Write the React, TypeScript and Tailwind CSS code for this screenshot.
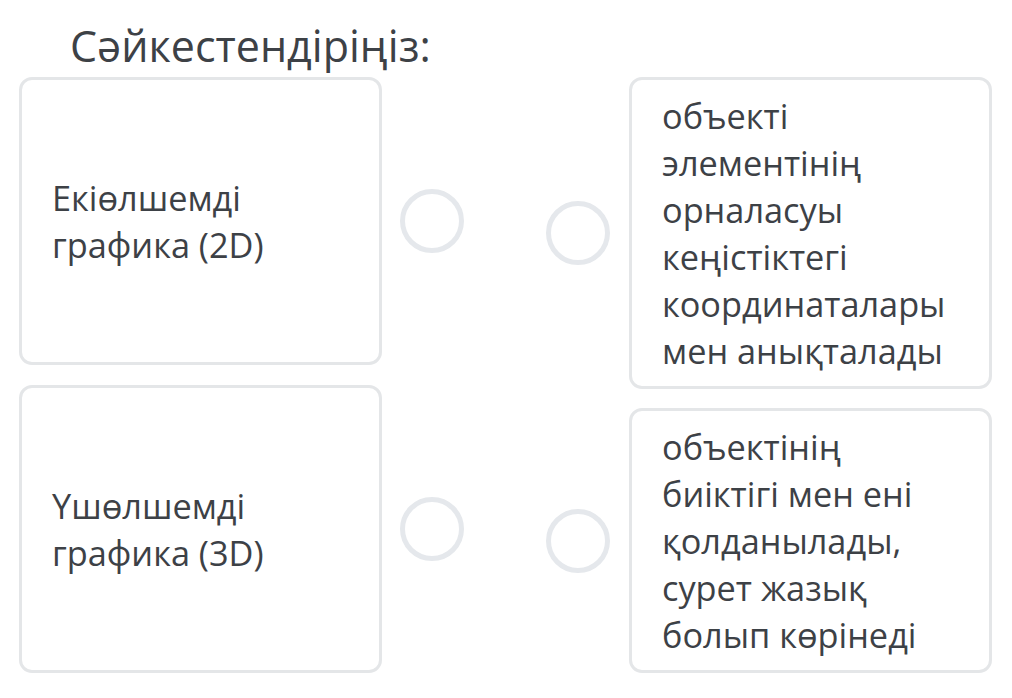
import React from "react";

const Circle = () => (
  <div className="w-[64px] h-[64px] rounded-full border-[5px] border-[#e5e8ec] shrink-0" />
);

const Lines = ({ lines }: { lines: string[] }) => (
  <>
    {lines.map((l, i) => (
      <div key={i} className="whitespace-nowrap">
        {l}
      </div>
    ))}
  </>
);

export default function App() {
  return (
    <div
      className="w-[1012px] h-[698px] bg-white text-[#3d4146] overflow-hidden"
      style={{ fontFamily: '"Open Sans", "Noto Sans", sans-serif' }}
    >
      <div className="pt-[18px] pl-[70px] text-[43px] leading-[56px]">Сәйкестендіріңіз:</div>
      <div className="flex pl-[19px] mt-[3px]">
        <div className="flex flex-col gap-[20px]">
          {[
            ["Екіөлшемді", "графика (2D)"],
            ["Үшөлшемді", "графика (3D)"],
          ].map((t, i) => (
            <div key={i} className="flex-1 flex items-center">
              <div className="self-stretch w-[363px] rounded-[13px] border-[3px] border-[#e4e6e8] flex items-center pl-[30px] pr-[20px] text-[34.3px] leading-[47px]">
                <div>
                  <Lines lines={t} />
                </div>
              </div>
              <div className="ml-[18px]">
                <Circle />
              </div>
            </div>
          ))}
        </div>
        <div className="flex flex-col gap-[19px] ml-[82px]">
          {[
            ["объекті", "элементінің", "орналасуы", "кеңістіктегі", "координаталары", "мен анықталады"],
            ["объектінің", "биіктігі мен ені", "қолданылады,", "сурет жазық", "болып көрінеді"],
          ].map((t, i) => (
            <div key={i} className="flex items-center">
              <Circle />
              <div className="ml-[19px] w-[363px] rounded-[13px] border-[3px] border-[#e4e6e8] pl-[30px] pr-[20px] py-[12px] text-[34.3px] leading-[47px]">
                <Lines lines={t} />
              </div>
            </div>
          ))}
        </div>
      </div>
    </div>
  );
}
